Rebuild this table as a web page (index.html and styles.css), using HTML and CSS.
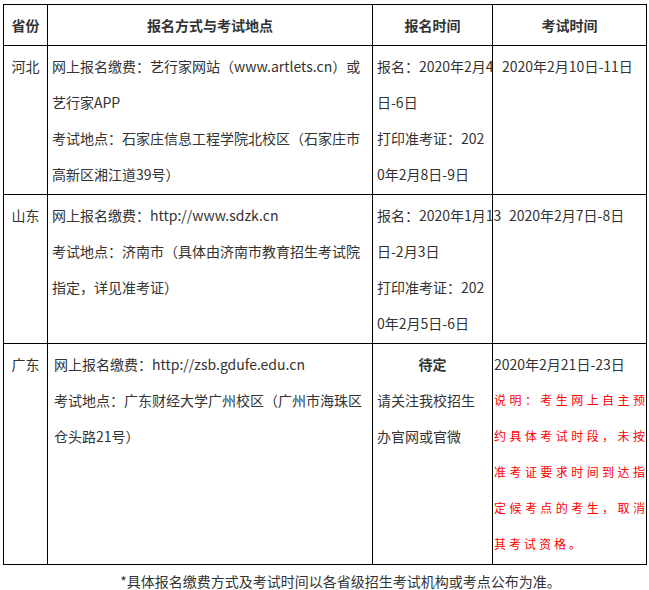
FILE: index.html
```html
<!DOCTYPE html>
<html lang="zh-CN">
<head>
<meta charset="utf-8">
<title>报名方式与考试地点</title>
<link rel="stylesheet" href="styles.css">
</head>
<body>
<div class="page">
  <table class="exam">
    <colgroup>
      <col class="c-prov">
      <col class="c-way">
      <col class="c-reg">
      <col class="c-exam">
    </colgroup>
    <thead>
      <tr>
        <th>省份</th>
        <th>报名方式与考试地点</th>
        <th>报名时间</th>
        <th>考试时间</th>
      </tr>
    </thead>
    <tbody>
      <tr>
        <td class="prov">河北</td>
        <td class="way">
          <span class="ln">网上报名缴费：艺行家网站（www.artlets.cn）或</span>
          <span class="ln">艺行家APP</span>
          <span class="ln">考试地点：石家庄信息工程学院北校区（石家庄市</span>
          <span class="ln">高新区湘江道39号）</span>
        </td>
        <td class="reg">
          <span class="ln">报名：2020年2月4</span>
          <span class="ln">日-6日</span>
          <span class="ln">打印准考证：202</span>
          <span class="ln">0年2月8日-9日</span>
        </td>
        <td class="exam-t shift1">
          <span class="ln">2020年2月10日-11日</span>
        </td>
      </tr>
      <tr>
        <td class="prov">山东</td>
        <td class="way">
          <span class="ln">网上报名缴费：http://www.sdzk.cn</span>
          <span class="ln">考试地点：济南市（具体由济南市教育招生考试院</span>
          <span class="ln">指定，详见准考证）</span>
        </td>
        <td class="reg">
          <span class="ln">报名：2020年1月13</span>
          <span class="ln">日-2月3日</span>
          <span class="ln">打印准考证：202</span>
          <span class="ln">0年2月5日-6日</span>
        </td>
        <td class="exam-t shift2">
          <span class="ln">2020年2月7日-8日</span>
        </td>
      </tr>
      <tr>
        <td class="prov">广东</td>
        <td class="way way-gd">
          <span class="ln">网上报名缴费：http://zsb.gdufe.edu.cn</span>
          <span class="ln">考试地点：广东财经大学广州校区（广州市海珠区</span>
          <span class="ln">仓头路21号）</span>
        </td>
        <td class="reg">
          <span class="ln center strong">待定</span>
          <span class="ln">请关注我校招生</span>
          <span class="ln">办官网或官微</span>
        </td>
        <td class="exam-t">
          <span class="ln">2020年2月21日-23日</span>
          <span class="note">
            <span class="ln jl">说明：考生网上自主预</span>
            <span class="ln jl">约具体考试时段，未按</span>
            <span class="ln jl">准考证要求时间到达指</span>
            <span class="ln jl">定候考点的考生，取消</span>
            <span class="ln">其考试资格。</span>
          </span>
        </td>
      </tr>
    </tbody>
  </table>
  <p class="foot">*具体报名缴费方式及考试时间以各省级招生考试机构或考点公布为准。</p>
</div>
</body>
</html>
```

FILE: styles.css
```css
html, body {
  margin: 0;
  padding: 0;
  background: #ffffff;
}

body {
  font-family: "Noto Sans CJK SC", "Noto Sans", sans-serif;
  font-size: 14px;
  color: #333333;
}

.page {
  padding: 4px 3px 0 3px;
}

.exam {
  border-collapse: collapse;
  table-layout: fixed;
  width: 643px;
}

.c-prov { width: 44px; }
.c-way { width: 325px; }
.c-reg { width: 120px; }
.c-exam { width: 154px; }

.exam th,
.exam td {
  border: 1px solid #000000;
  vertical-align: top;
  line-height: 36px;
  padding: 2px 4px 2px 4px;
  text-align: left;
}

.exam th {
  font-weight: bold;
  text-align: center;
  color: #333333;
}

.exam td.prov {
  text-align: center;
  padding-left: 2px;
  padding-right: 2px;
}

.ln {
  display: block;
  white-space: nowrap;
}

.center { text-align: center; }
.strong { font-weight: bold; }

.exam td.way-gd { padding-left: 6px; }

.exam td.exam-t {
  padding-left: 1px;
  padding-right: 1px;
}

.exam td.shift1 { padding-left: 9px; }
.exam td.shift2 { padding-left: 16px; }

.note {
  display: block;
  color: #ff0000;
  font-size: 12px;
  font-weight: normal;
  letter-spacing: 3px;
}

.note .ln {
  line-height: 36px;
}

.note .jl {
  text-align: justify;
  text-align-last: justify;
  letter-spacing: 0;
}

.foot {
  margin: 0;
  padding: 8px 0 0 16px;
  line-height: 16px;
  text-align: center;
  width: 643px;
}
```
